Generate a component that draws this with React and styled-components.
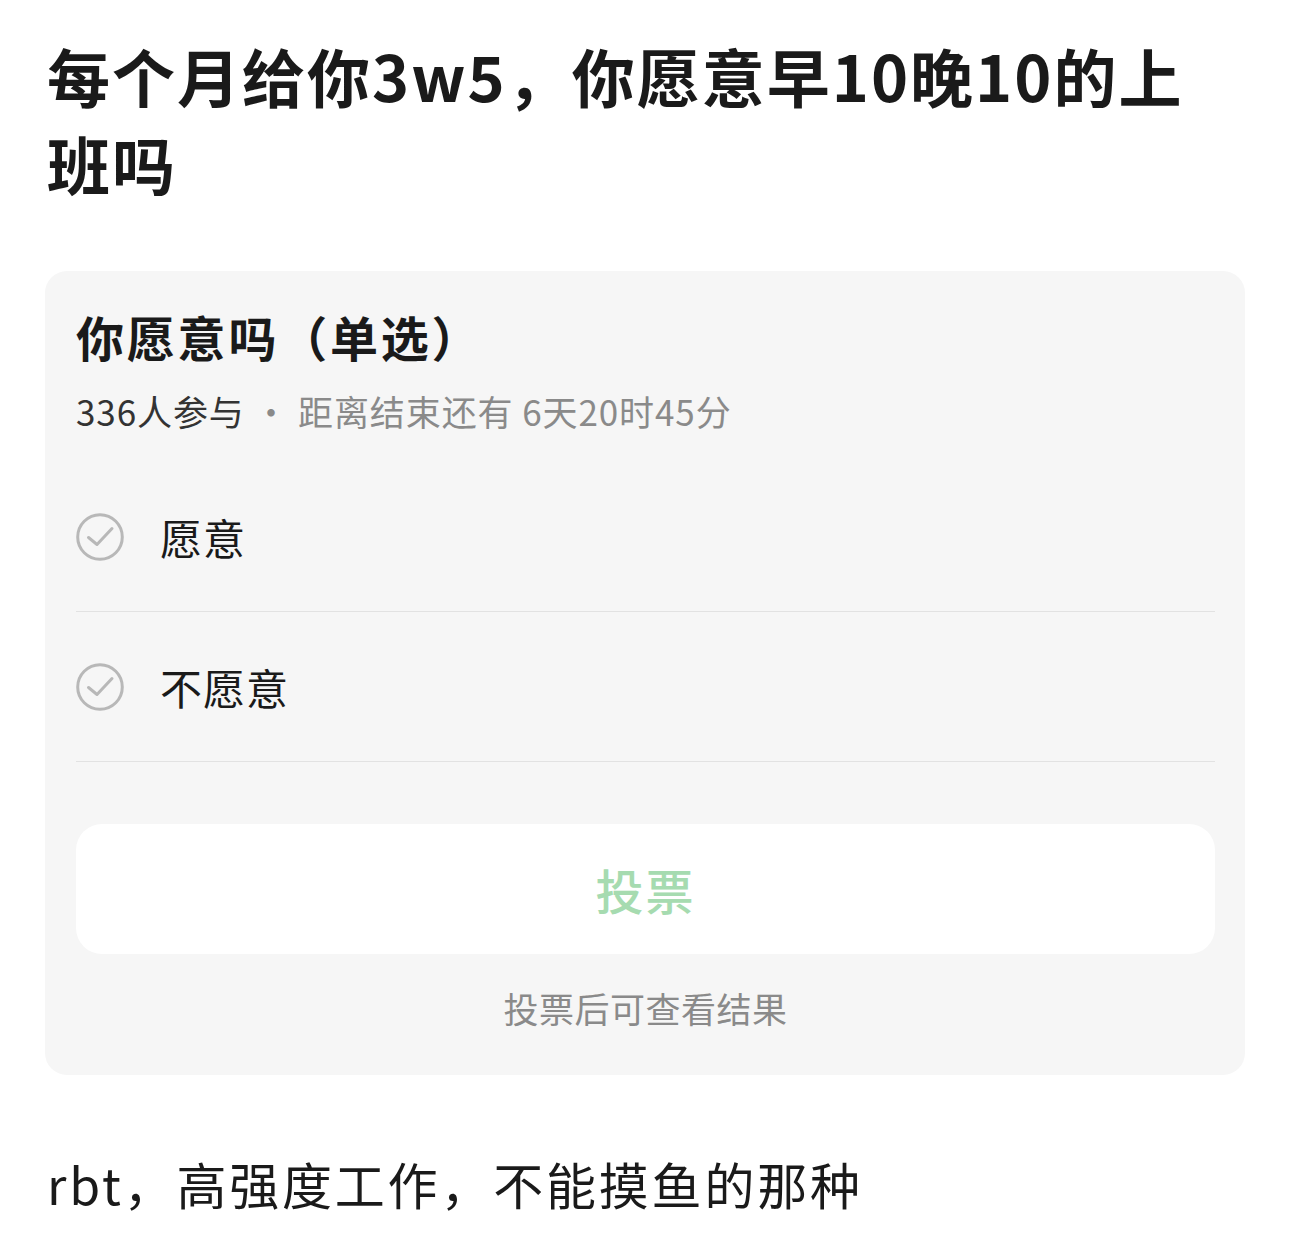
import React from 'react'
import styled, { createGlobalStyle } from 'styled-components'

const GlobalStyle = createGlobalStyle`
  body {
    margin: 0;
    background: #ffffff;
    font-family: "Noto Sans CJK SC", "Noto Sans", sans-serif;
    color: #1a1a1a;
  }
`

const Page = styled.div`
  width: 1290px;
  padding: 31px 45px 0 47px;
  box-sizing: border-box;
`

const Title = styled.h1`
  margin: 0;
  font-size: 63px;
  line-height: 88px;
  font-weight: 700;
  letter-spacing: 2px;
  color: #1a1a1a;
`

const Poll = styled.div`
  margin-top: 64px;
  margin-left: -2px;
  background: #f6f6f6;
  border-radius: 22px;
  padding: 33px 30px 43px 31px;
`

const PollTitle = styled.h2`
  margin: 0;
  font-size: 48px;
  line-height: 64px;
  font-weight: 700;
  letter-spacing: 2.8px;
  color: #1a1a1a;
`

const Meta = styled.div`
  margin-top: 21px;
  font-size: 35px;
  line-height: 44px;
  letter-spacing: 0.9px;
  color: #8a8a8a;
`

const Count = styled.span`
  color: #333333;
`

const Options = styled.div`
  margin-top: 29px;
`

const Option = styled.div`
  display: flex;
  align-items: center;
  gap: 36px;
  height: 150px;
  box-sizing: border-box;
  border-bottom: 1.5px solid #e2e2e2;
`

const OptionLabel = styled.span`
  font-size: 42px;
  letter-spacing: 1px;
  color: #1a1a1a;
`

const VoteButton = styled.div`
  margin-top: 62px;
  height: 130px;
  border-radius: 26px;
  background: #ffffff;
  display: flex;
  align-items: center;
  justify-content: center;
  font-size: 48px;
  font-weight: 500;
  letter-spacing: 2px;
  color: #a6dbb0;
`

const Hint = styled.div`
  margin-top: 30px;
  text-align: center;
  font-size: 35px;
  line-height: 48px;
  letter-spacing: 0.5px;
  color: #8a8a8a;
`

const Body = styled.p`
  margin: 76px 0 0;
  font-size: 50px;
  line-height: 64px;
  letter-spacing: 2.8px;
  color: #1a1a1a;
`

const Check = () => (
  <svg width="48" height="48" viewBox="0 0 48 48" fill="none">
    <circle cx="24" cy="24" r="22.3" stroke="#b8b8b8" strokeWidth="3" />
    <path d="M12.5 24.5 L21 31.5 L36 15.5" stroke="#b8b8b8" strokeWidth="3" strokeLinecap="round" strokeLinejoin="round" />
  </svg>
)

const choices = ['愿意', '不愿意']

export default function App() {
  return (
    <>
      <GlobalStyle />
      <Page>
        <Title>每个月给你3w5，你愿意早10晚10的上班吗</Title>
        <Poll>
          <PollTitle>你愿意吗（单选）</PollTitle>
          <Meta>
            <Count>336人参与</Count> · 距离结束还有 6天20时45分
          </Meta>
          <Options>
            {choices.map((c) => (
              <Option key={c}>
                <Check />
                <OptionLabel>{c}</OptionLabel>
              </Option>
            ))}
          </Options>
          <VoteButton>投票</VoteButton>
          <Hint>投票后可查看结果</Hint>
        </Poll>
        <Body>rbt，高强度工作，不能摸鱼的那种</Body>
      </Page>
    </>
  )
}
